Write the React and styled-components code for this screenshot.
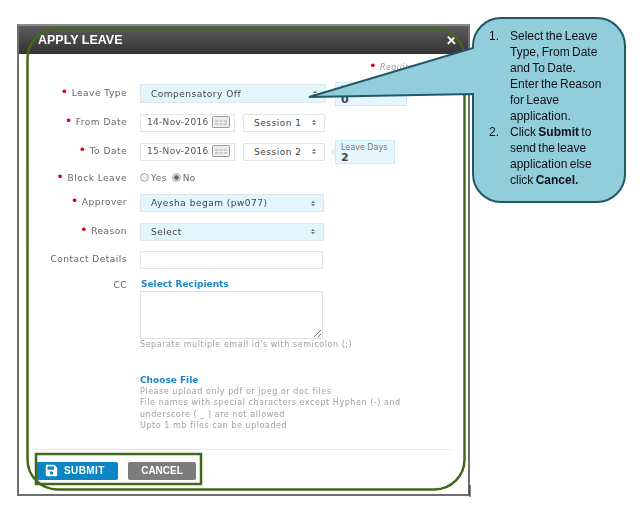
import React from 'react';
import styled, { createGlobalStyle } from 'styled-components';
import { FaSave } from 'react-icons/fa';

const GlobalStyle = createGlobalStyle`
  html, body {
    margin: 0;
    padding: 0;
    background: #fff;
  }
`;

const Page = styled.div`
  position: relative;
  width: 640px;
  height: 508px;
  padding: 24px 0 0 17px;
  box-sizing: border-box;
  overflow: hidden;
  font-family: "DejaVu Sans", sans-serif;
`;

const Modal = styled.div`
  position: relative;
  width: 453px;
  height: 472px;
  box-sizing: border-box;
  border: 2px solid #6f6f6f;
  border-top-color: #8c8c8c;
  background: #fff;
  display: flex;
  flex-direction: column;
`;

const Header = styled.div`
  height: 28px;
  flex: none;
  padding: 0 11px 0 19px;
  display: flex;
  align-items: center;
  justify-content: space-between;
  background: linear-gradient(#5c5c5c, #333);
  color: #fff;
  font: bold 12.5px "Liberation Sans", sans-serif;
  filter: blur(0.3px);
`;

const Close = styled.span`
  font: bold 13px "Liberation Sans", sans-serif;
`;

const Body = styled.div`
  flex: 1;
  filter: blur(0.4px);
  display: flex;
  flex-direction: column;
`;

const Required = styled.div`
  height: 30px;
  padding-top: 6px;
  box-sizing: border-box;
  padding-left: 350px;
  font-size: 8px;
  font-style: italic;
  letter-spacing: 0.4px;
  color: #999;
  white-space: nowrap;
  line-height: 16px;
`;

const Form = styled.div`
  display: flex;
  flex-direction: column;
  gap: 10px;
`;

const Row = styled.div`
  position: relative;
  display: grid;
  grid-template-columns: 108px 1fr;
  column-gap: 13px;
  height: ${p => p.$h || 19}px;
  align-items: ${p => p.$top ? 'start' : 'center'};
`;

const Label = styled.label`
  text-align: right;
  font-size: 9px;
  letter-spacing: 0.5px;
  color: #666;
  white-space: nowrap;
  line-height: 12px;
  padding-bottom: ${p => p.$flat ? 0 : 2}px;
`;

const Star = styled.span`
  color: #d90015;
  font-size: 13px;
  line-height: 10px;
  margin-right: 3px;
`;

const Controls = styled.div`
  display: flex;
  align-items: center;
  gap: 8px;
`;

const Select = styled.div`
  width: ${p => p.$w}px;
  height: ${p => p.$h || 18}px;
  box-sizing: border-box;
  border: 1px solid ${p => p.$plain ? '#e6e6e6' : '#dfe7ea'};
  background: ${p => p.$plain ? '#fff' : '#e3f5fd'};
  padding: 0 8px 0 10px;
  display: flex;
  align-items: center;
  justify-content: space-between;
  font-size: 9px;
  letter-spacing: 0.5px;
  color: #444;
  white-space: nowrap;
`;

const Arrows = styled.svg`
  width: 4px;
  height: 7px;
  flex: none;
  fill: #777;
`;

const DateField = styled.div`
  width: 95px;
  height: 18px;
  box-sizing: border-box;
  border: 1px solid #e6e6e6;
  padding: 0 4px 2px 6px;
  display: flex;
  align-items: center;
  justify-content: space-between;
  font-size: 9px;
  letter-spacing: 0.3px;
  color: #555;
  white-space: nowrap;
`;

const Popover = styled.div`
  position: absolute;
  left: ${p => p.$left}px;
  top: ${p => p.$top}px;
  width: ${p => p.$w}px;
  height: 24px;
  box-sizing: border-box;
  border: 1px solid #cfeaf7;
  background: #e6f6fd;
  padding: 2px 0 0 5px;
  font-size: 8px;
  line-height: 9px;
  color: #777;
  &::before {
    content: '';
    position: absolute;
    left: -6px;
    top: 7px;
    border: 4px solid transparent;
    border-left: 0;
    border-right: 5px solid #dff2fb;
  }
`;

const PopoverValue = styled.div`
  font-size: 11px;
  line-height: 11px;
  font-weight: bold;
  color: #444;
`;

const Radios = styled.div`
  display: flex;
  align-items: center;
  font-size: 9px;
  letter-spacing: 0.4px;
  color: #666;
`;

const Radio = styled.span`
  width: 9px;
  height: 9px;
  box-sizing: border-box;
  border: 1px solid #aaa;
  border-radius: 50%;
  background: ${p => p.$on ? 'radial-gradient(#666 40%, #ddd 50%)' : '#eee'};
  margin-right: 2px;
`;

const RadioText = styled.span`
  margin-right: 5px;
`;

const LinkText = styled.a`
  display: block;
  color: #1b87c4;
  font-size: 9px;
  font-weight: bold;
  line-height: 11px;
  padding-left: ${p => p.$flush ? 0 : 1}px;
`;

const TextArea = styled.div`
  position: relative;
  width: 183px;
  height: 48px;
  box-sizing: border-box;
  border: 1px solid #e0e0e0;
  margin-top: 1px;
`;

const Grip = styled.svg`
  position: absolute;
  right: 0;
  bottom: 0;
  width: 9px;
  height: 9px;
  stroke: #777;
  stroke-width: 1;
`;

const Hint = styled.div`
  font-size: 8px;
  letter-spacing: 0.55px;
  line-height: 11.4px;
  color: #a0a0a0;
  white-space: nowrap;
`;

const FileBlock = styled.div`
  padding: 25px 0 0 121px;
`;

const Footer = styled.div`
  margin: 17px 16px 0 16px;
  border-top: 1px solid #e8e8e8;
  padding: 12px 0 0 1px;
  display: flex;
  gap: 10px;
`;

const Button = styled.button`
  height: 18px;
  width: ${p => p.$w}px;
  border: 0;
  border-radius: 2px;
  padding: 0 0 0 ${p => p.$primary ? 9 : 0}px;
  background: ${p => p.$primary ? '#0b85c4' : '#7d7d7d'};
  color: #fff;
  font: bold 10px "Liberation Sans", sans-serif;
  letter-spacing: ${p => p.$primary ? 0.4 : 0}px;
  display: flex;
  align-items: center;
  justify-content: ${p => p.$primary ? 'flex-start' : 'center'};
  gap: 6px;
`;

const Overlay = styled.svg`
  position: absolute;
  left: 0;
  top: 0;
  width: 640px;
  height: 508px;
  pointer-events: none;
`;

const CalloutText = styled.ol`
  position: absolute;
  left: 489px;
  top: 28px;
  width: 125px;
  margin: 0;
  padding: 0;
  list-style: none;
  font: 12px/16px "Liberation Sans", sans-serif;
  word-spacing: -1px;
  color: #111;
  white-space: nowrap;
`;

const CalloutItem = styled.li`
  display: grid;
  grid-template-columns: 21px 1fr;
`;

const Calendar = () => (
  <svg width="18" height="12" viewBox="0 0 18 12">
    <rect x="0.5" y="0.5" width="17" height="11" rx="1" fill="#eee" stroke="#999" />
    <path d="M3 4h12v5H3z" fill="#ccc" />
    <path d="M7 4v5M11 4v5M3 6.5h12" stroke="#fff" strokeWidth="0.7" />
  </svg>
);

const UpDown = () => (
  <Arrows viewBox="0 0 5 7">
    <path d="M2.5 0 5 3H0zM2.5 7 0 4h5z" />
  </Arrows>
);

const callout = [
  <>Select the Leave<br />Type, From Date<br />and To Date.<br />Enter the Reason<br />for Leave<br />application.</>,
  <>Click <b>Submit</b> to<br />send the leave<br />application else<br />click <b>Cancel.</b></>,
];

const App = () => (
  <Page>
    <GlobalStyle />
    <Modal>
      <Header>
        APPLY LEAVE
        <Close>✕</Close>
      </Header>
      <Body>
        <Required><Star>•</Star>Required</Required>
        <Form>
          <Row>
            <Label><Star>•</Star>Leave Type</Label>
            <Select $w={186} $h={19}>Compensatory Off<UpDown /></Select>
            <Popover $left={316} $top={-2} $w={72}>
              Leave Balance
              <PopoverValue>0</PopoverValue>
            </Popover>
          </Row>
          <Row>
            <Label><Star>•</Star>From Date</Label>
            <Controls>
              <DateField>14-Nov-2016<Calendar /></DateField>
              <Select $w={82} $plain>Session 1<UpDown /></Select>
            </Controls>
          </Row>
          <Row>
            <Label><Star>•</Star>To Date</Label>
            <Controls>
              <DateField>15-Nov-2016<Calendar /></DateField>
              <Select $w={82} $plain>Session 2<UpDown /></Select>
            </Controls>
            <Popover $left={316} $top={-2} $w={60}>
              Leave Days
              <PopoverValue>2</PopoverValue>
            </Popover>
          </Row>
          <Row $h={13}>
            <Label $flat><Star>•</Star>Block Leave</Label>
            <Radios>
              <Radio /><RadioText>Yes</RadioText>
              <Radio $on /><RadioText>No</RadioText>
            </Radios>
          </Row>
          <Row $h={18}>
            <Label><Star>•</Star>Approver</Label>
            <Select $w={184}>Ayesha begam (pw077)<UpDown /></Select>
          </Row>
          <Row>
            <Label><Star>•</Star>Reason</Label>
            <Select $w={184}>Select<UpDown /></Select>
          </Row>
          <Row $h={18}>
            <Label>Contact Details</Label>
            <Select $w={183} $plain />
          </Row>
          <Row $h={71} $top>
            <Label>CC</Label>
            <div>
              <LinkText>Select Recipients</LinkText>
              <TextArea>
                <Grip viewBox="0 0 9 9"><path d="M1 8 8 1M5 8l3-3" /></Grip>
              </TextArea>
              <Hint>Separate multiple email id's with semicolon (;)</Hint>
            </div>
          </Row>
        </Form>
        <FileBlock>
          <LinkText $flush>Choose File</LinkText>
          <Hint>Please upload only pdf or jpeg or doc files</Hint>
          <Hint>File names with special characters except Hyphen (-) and</Hint>
          <Hint>underscore ( _ ) are not allowed</Hint>
          <Hint>Upto 1 mb files can be uploaded</Hint>
        </FileBlock>
        <Footer>
          <Button $primary $w={82}><FaSave size={13} />SUBMIT</Button>
          <Button $w={68}>CANCEL</Button>
        </Footer>
      </Body>
    </Modal>
    <Overlay viewBox="0 0 640 508">
      <rect x="27.5" y="28.5" width="437" height="461" rx="30" fill="none" stroke="#41691a" strokeWidth="2.5" />
      <rect x="36" y="454" width="165" height="30" fill="none" stroke="#41691a" strokeWidth="2.5" />
      <path d="M470 485v12" stroke="#222" strokeWidth="1" />
      <path
        d="M501 18H597a28 28 0 0 1 28 28V174a28 28 0 0 1-28 28H501a28 28 0 0 1-28-28V94L309 97 473 48V46a28 28 0 0 1 28-28Z"
        fill="#92cddc"
        stroke="#215968"
        strokeWidth="2"
      />
    </Overlay>
    <CalloutText>
      {callout.map((item, i) => (
        <CalloutItem key={i}>
          <span>{i + 1}.</span>
          <span>{item}</span>
        </CalloutItem>
      ))}
    </CalloutText>
  </Page>
);

export default App;
